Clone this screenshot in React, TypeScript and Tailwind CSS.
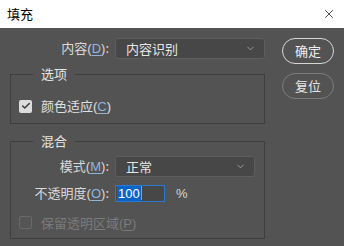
import { X, ChevronDown, Check } from "lucide-react";

const font = "font-['Noto_Sans_CJK_SC','Noto_Sans',sans-serif]";

function Select({ value, width }: { value: string; width: string }) {
  return (
    <div
      className={`flex h-[21px] ${width} items-center justify-between rounded-[3px] border border-[#5e5e5e] bg-[#474747] pl-[10px] pr-[8px] text-[13px] text-[#e6e6e6]`}
    >
      <span>{value}</span>
      <ChevronDown size={11} strokeWidth={1.5} className="text-[#bdbdbd]" />
    </div>
  );
}

function Mnemonic({ k }: { k: string }) {
  return (
    <span className="font-['Liberation_Sans',sans-serif]">
      (<span className="text-[#8fb4e0] underline underline-offset-2">{k}</span>)
    </span>
  );
}

export default function App() {
  return (
    <div className={`flex h-[246px] w-[344px] flex-col overflow-hidden bg-[#535353] ${font}`}>
      {/* Title bar */}
      <div className="flex h-[28px] items-center justify-between bg-white pl-[7px] pr-[8px] text-[13px] text-black">
        <span>填充</span>
        <X size={14} strokeWidth={1.2} />
      </div>

      <div className="flex gap-[17px] pl-[10px] pt-[10px]">
        {/* Left column */}
        <div className="flex w-[255px] flex-col">
          <div className="flex items-center gap-[6px] text-[13px] text-[#d9d9d9]">
            <span className="w-[99px] text-right">
              内容<Mnemonic k="D" />:
            </span>
            <Select value="内容识别" width="w-[150px]" />
          </div>

          <fieldset className="mt-[7px] h-[58px] border border-[#3f3f3f] pl-[8px]">
            <legend className="ml-[14px] px-[8px] text-[13px] leading-[16px] text-[#e6e6e6]">选项</legend>
            <div className="mt-[14px] flex items-center gap-[9px] text-[13px] text-[#e0e0e0]">
              <span className="flex h-[13px] w-[13px] items-center justify-center rounded-[2px] bg-[#dcdcdc]">
                <Check size={10} strokeWidth={3.5} className="text-[#3a3a3a]" />
              </span>
              <span>
                颜色适应<Mnemonic k="C" />
              </span>
            </div>
          </fieldset>

          <fieldset className="mt-[9px] h-[106px] border border-[#3f3f3f] pl-[8px]">
            <legend className="ml-[14px] px-[8px] text-[13px] leading-[16px] text-[#e6e6e6]">混合</legend>
            <div className="mt-[7px] flex items-center gap-[6px] text-[13px] text-[#d9d9d9]">
              <span className="w-[90px] text-right">
                模式<Mnemonic k="M" />:
              </span>
              <Select value="正常" width="w-[140px]" />
            </div>
            <div className="mt-[6px] flex items-center gap-[6px] text-[13px] text-[#d9d9d9]">
              <span className="w-[90px] text-right">
                不透明度<Mnemonic k="O" />:
              </span>
              <div className="flex h-[17px] w-[50px] items-center border border-[#2a78d0] bg-[#474747] pl-[1px] font-['Liberation_Sans',sans-serif] text-[13px]">
                <span className="bg-[#0a64c8] px-[1px] leading-[15px] text-white">100</span>
                <span className="h-[14px] w-[1px] bg-[#ff8a00]" />
              </div>
              <span className="ml-[5px] font-['Liberation_Sans',sans-serif]">%</span>
            </div>
            <div className="mt-[9px] flex items-center gap-[9px] text-[13px] text-[#7b7b7b]">
              <span className="h-[13px] w-[13px] rounded-[2px] border border-[#6a6a6a] bg-[#555555]" />
              <span>
                保留透明区域
                <span className="font-['Liberation_Sans',sans-serif]">
                  (<span className="underline underline-offset-2">P</span>)
                </span>
              </span>
            </div>
          </fieldset>
        </div>

        {/* Right column buttons */}
        <div className="flex flex-col gap-[9px]">
          <button className="h-[26px] w-[52px] rounded-full border-[1.5px] border-[#d6d6d6] text-[13px] text-[#f0f0f0]">
            确定
          </button>
          <button className="h-[26px] w-[52px] rounded-full border border-[#7c7c7c] text-[13px] text-[#e6e6e6]">
            复位
          </button>
        </div>
      </div>
    </div>
  );
}
